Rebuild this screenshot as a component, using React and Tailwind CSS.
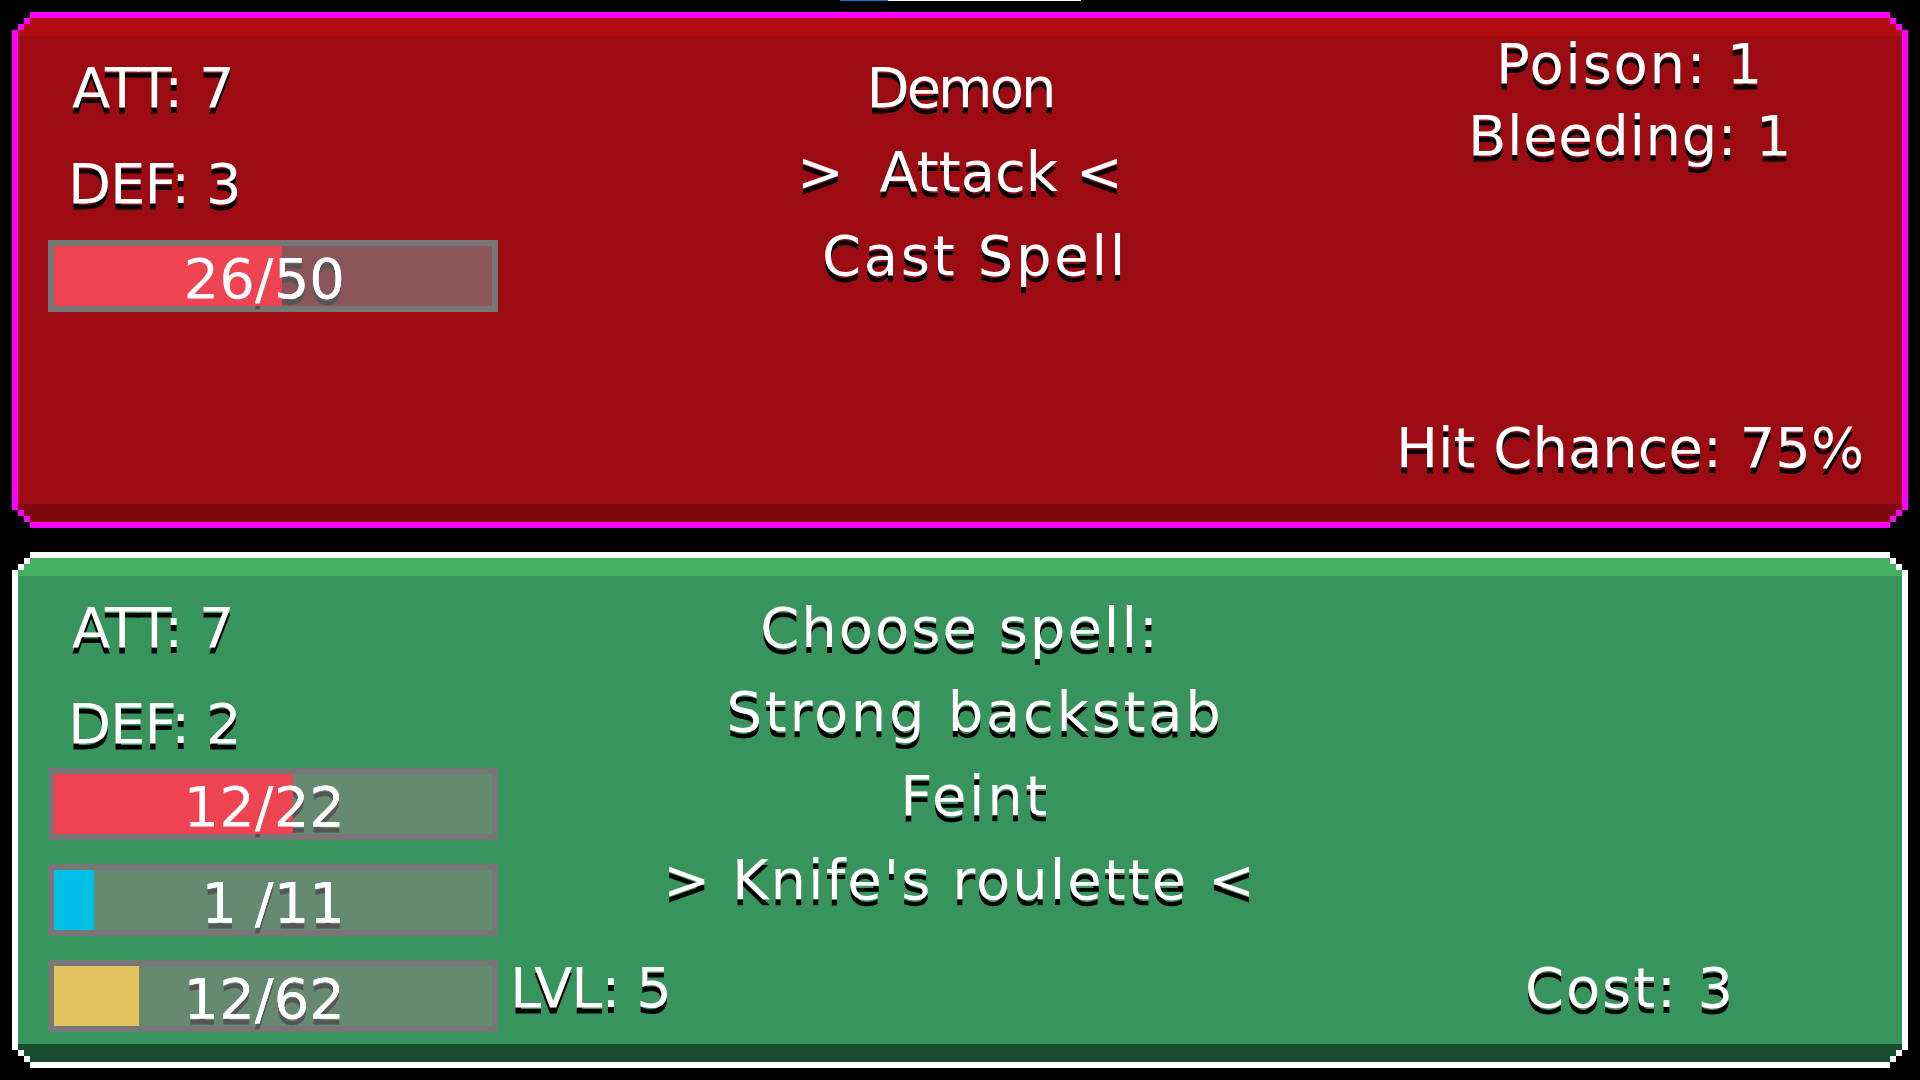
import React from "react";

const OUTER =
  "[clip-path:polygon(18px_0,1878px_0,1878px_6px,1884px_6px,1884px_12px,1890px_12px,1890px_18px,1896px_18px,1896px_498px,1890px_498px,1890px_504px,1884px_504px,1884px_510px,1878px_510px,1878px_516px,18px_516px,18px_510px,12px_510px,12px_504px,6px_504px,6px_498px,0_498px,0_18px,6px_18px,6px_12px,12px_12px,12px_6px,18px_6px)]";
const INNER =
  "[clip-path:polygon(12px_0,1872px_0,1872px_6px,1878px_6px,1878px_12px,1884px_12px,1884px_492px,1878px_492px,1878px_498px,1872px_498px,1872px_504px,12px_504px,12px_498px,6px_498px,6px_492px,0_492px,0_12px,6px_12px,6px_6px,12px_6px)]";

function Panel({ border, bg, className = "", children }) {
  return (
    <div className={`w-[1896px] h-[516px] p-[6px] ml-[12px] ${OUTER} ${border} ${className}`}>
      <div className={`w-full h-full flex ${INNER} ${bg}`}>{children}</div>
    </div>
  );
}

function Bar({ pct, fill, track, text, className = "" }) {
  return (
    <div className={`w-[450px] h-[72px] p-[6px] bg-[#777777] shrink-0 ${className}`}>
      <div className={`relative w-full h-full ${track}`}>
        <div className="absolute left-0 right-[147px] top-[3px] text-right leading-[60px] whitespace-pre [text-shadow:0_6px_0_#555555]">
          {text}
        </div>
        <div className={`absolute left-0 top-0 h-full ${fill}`} style={{ width: `${pct}%` }} />
        <div className="absolute left-0 right-[147px] top-[3px] text-right leading-[60px] whitespace-pre [text-shadow:none]">
          {text}
        </div>
      </div>
    </div>
  );
}

export default function App() {
  return (
    <div className="w-[1920px] h-[1080px] bg-black overflow-hidden font-['DejaVu_Sans',sans-serif] text-white text-[56px] [text-shadow:0_6px_0_#000]">
      <div className="flex h-[1px] ml-[840px]">
        <div className="w-[48px] bg-[#1671d1]" />
        <div className="w-[193px] bg-white" />
      </div>

      {/* Enemy panel */}
      <Panel
        border="bg-[#ff00ff]"
        bg="bg-[linear-gradient(to_bottom,#b20d10_18px,#9c0b11_18px,#9c0b11_486px,#7f070d_486px)]"
        className="mt-[11px]"
      >
        <div className="w-[500px] shrink-0 flex flex-col pt-[22px]">
          <div className="h-[96px] leading-[96px] pl-[54px] whitespace-pre tracking-[-1px]">ATT: 7</div>
          <div className="h-[96px] leading-[96px] pl-[50px] whitespace-pre tracking-[-1px]">DEF: 3</div>
          <Bar
            className="mt-[8px] ml-[30px]"
            pct={52}
            fill="bg-[#ee4452]"
            track="bg-[#8a5558]"
            text="26/50"
          />
        </div>
        <div className="flex-1 flex flex-col items-center pt-[28px]">
          <div className="h-[84px] leading-[84px] whitespace-pre tracking-[-3px]">Demon</div>
          <div className="h-[84px] leading-[84px] whitespace-pre">{">  Attack <"}</div>
          <div className="h-[84px] leading-[84px] whitespace-pre tracking-[2.7px] ml-[30px]">Cast Spell</div>
        </div>
        <div className="w-[500px] shrink-0 flex flex-col items-center pt-[10px] pr-[44px] pb-[38px]">
          <div className="h-[72px] leading-[72px] whitespace-pre tracking-[1.7px]">Poison: 1</div>
          <div className="h-[72px] leading-[72px] whitespace-pre tracking-[0.6px]">Bleeding: 1</div>
          <div className="mt-auto h-[72px] leading-[72px] whitespace-pre">Hit Chance: 75%</div>
        </div>
      </Panel>

      {/* Player panel */}
      <Panel
        border="bg-white"
        bg="bg-[linear-gradient(to_bottom,#43b161_18px,#38945d_18px,#38945d_486px,#174c2e_486px)]"
        className="mt-[24px]"
      >
        <div className="w-[500px] shrink-0 flex flex-col pt-[22px]">
          <div className="h-[96px] leading-[96px] pl-[54px] whitespace-pre tracking-[-1px]">ATT: 7</div>
          <div className="h-[96px] leading-[96px] pl-[50px] whitespace-pre tracking-[-1px]">DEF: 2</div>
          <Bar
            className="-mt-[4px] ml-[30px]"
            pct={(12 / 22) * 100}
            fill="bg-[#ee4452]"
            track="bg-[#668a70]"
            text="12/22"
          />
          <Bar
            className="mt-[24px] ml-[30px]"
            pct={(1 / 11) * 100}
            fill="bg-[#00c0e8]"
            track="bg-[#668a70]"
            text="1 /11"
          />
          <div className="mt-[24px] ml-[30px] flex items-start">
            <Bar pct={(12 / 62) * 100} fill="bg-[#e3c45f]" track="bg-[#668a70]" text="12/62" />
            <div className="ml-[12px] -mt-[8px] h-[72px] leading-[72px] whitespace-pre tracking-[-1px]">LVL: 5</div>
          </div>
        </div>
        <div className="flex-1 flex flex-col items-center pt-[28px]">
          <div className="h-[84px] leading-[84px] whitespace-pre tracking-[2px]">Choose spell:</div>
          <div className="h-[84px] leading-[84px] whitespace-pre tracking-[2.7px] ml-[30px]">Strong backstab</div>
          <div className="h-[84px] leading-[84px] whitespace-pre tracking-[2.6px] ml-[30px]">Feint</div>
          <div className="h-[84px] leading-[84px] whitespace-pre tracking-[2px]">{"> Knife's roulette <"}</div>
        </div>
        <div className="w-[500px] shrink-0 flex flex-col items-center pt-[10px] pr-[44px] pb-[38px]">
          <div className="mt-auto h-[72px] leading-[72px] whitespace-pre tracking-[1.9px]">Cost: 3</div>
        </div>
      </Panel>
    </div>
  );
}
